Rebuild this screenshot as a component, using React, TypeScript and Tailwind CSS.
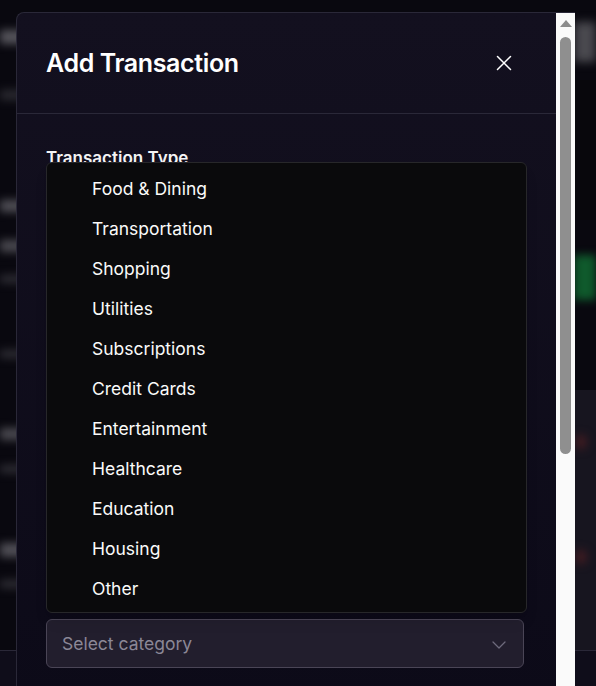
import { ChevronDown } from "lucide-react";

const categories = [
  "Food & Dining",
  "Transportation",
  "Shopping",
  "Utilities",
  "Subscriptions",
  "Credit Cards",
  "Entertainment",
  "Healthcare",
  "Education",
  "Housing",
  "Other",
];

function Backdrop() {
  // blurred dashboard sitting behind the dialog
  return (
    <div className="absolute inset-0 overflow-hidden">
      <div className="absolute left-0 top-[30px] h-[14px] w-[40px] bg-[#55545b] blur-[4px]" />
      <div className="absolute left-0 top-[90px] h-[10px] w-[30px] bg-[#2a2930] blur-[4px]" />
      <div className="absolute left-0 top-[200px] h-[12px] w-[40px] bg-[#504f56] blur-[4px]" />
      <div className="absolute left-0 top-[240px] h-[12px] w-[40px] bg-[#4a4950] blur-[4px]" />
      <div className="absolute left-0 top-[275px] h-[8px] w-[30px] bg-[#2f2e35] blur-[4px]" />
      <div className="absolute left-0 top-[350px] h-[8px] w-[30px] bg-[#2f2e35] blur-[4px]" />
      <div className="absolute left-0 top-[428px] h-[12px] w-[40px] bg-[#4a4950] blur-[4px]" />
      <div className="absolute left-0 top-[465px] h-[8px] w-[30px] bg-[#2f2e35] blur-[4px]" />
      <div className="absolute left-0 top-[543px] h-[14px] w-[40px] bg-[#504f56] blur-[4px]" />
      <div className="absolute left-0 top-[580px] h-[8px] w-[30px] bg-[#2f2e35] blur-[4px]" />
      <div className="absolute left-0 top-[650px] h-[36px] w-[16px] border-t border-[#2a2838] bg-[#0f0d1a]" />

      <div className="absolute right-0 top-[22px] h-[40px] w-[22px] bg-[#4a494f] blur-[5px]" />
      <div className="absolute right-0 top-[80px] h-[140px] w-[22px] bg-[#08070c]" />
      <div className="absolute right-0 top-[255px] h-[45px] w-[22px] bg-[#0f5a2c] blur-[4px]" />
      <div className="absolute right-0 top-[390px] h-[260px] w-[22px] bg-[#17151f]" />
      <div className="absolute right-[10px] top-[435px] h-[14px] w-[10px] rounded-full bg-[#4a1d22] blur-[5px]" />
      <div className="absolute right-[10px] top-[550px] h-[14px] w-[10px] rounded-full bg-[#4a1d22] blur-[5px]" />
      <div className="absolute right-0 top-[650px] h-[36px] w-[22px] border-t border-[#2a2838] bg-[#0f0d1a]" />
    </div>
  );
}

function Scrollbar() {
  return (
    <div className="flex w-[19px] shrink-0 flex-col items-center bg-[#fafafa] pt-[7px]">
      <div className="h-0 w-0 border-x-[6px] border-b-[7px] border-x-transparent border-b-[#8c8c8c]" />
      <div className="mt-[10px] h-[417px] w-[11px] rounded-full bg-[#8f8f8f]" />
    </div>
  );
}

export default function App() {
  return (
    <div
      className="relative h-[686px] w-[596px] overflow-hidden bg-[#09080f] pl-[16px] pt-[12px]"
      style={{ fontFamily: "Inter, 'Noto Sans', sans-serif" }}
    >
      <Backdrop />

      <div className="relative z-10 flex h-[700px] w-[559px] overflow-hidden rounded-tl-[8px] border-l border-t border-[#2a2838] bg-gradient-to-b from-[#13101f] to-[#0c0a18]">
        <div className="relative flex-1">
          <div className="flex h-[101px] items-center justify-between border-b border-[#2a2838] pl-[29px] pr-[30px]">
            <h2 className="text-[25px] font-semibold leading-8 tracking-[-0.015em] text-white">
              Add Transaction
            </h2>
            <button className="mr-[6px] flex size-8 items-center justify-center text-white">
              <svg width="16" height="16" viewBox="0 0 16 16" fill="none" stroke="currentColor" strokeWidth="1.5" strokeLinecap="round">
                <path d="M1.5 1.5 14.5 14.5M14.5 1.5 1.5 14.5" />
              </svg>
            </button>
          </div>

          <div className="px-[29px] pt-[32px]">
            <label className="block text-[17px] font-semibold leading-6 text-[#f4f4f5]">
              Transaction Type
            </label>
            <div className="h-[449px]" />
            <div className="flex h-[49px] w-[478px] items-center justify-between rounded-[6px] border border-[#4a4556] bg-[#221e2d] pl-[15px] pr-[12px] pt-[2px]">
              <span className="text-[17.5px] text-[#8b8796]">Select category</span>
              <ChevronDown className="size-6 text-[#6e6a7c]" strokeWidth={1.25} />
            </div>
          </div>

          {/* open select listbox */}
          <div className="absolute left-[29px] top-[149px] w-[481px] rounded-[6px] border border-[#27272a] bg-[#0a0a0c] px-[4px] pb-[3px] pt-[6px] shadow-lg">
            {categories.map((c) => (
              <div
                key={c}
                className="flex h-[40px] items-center pl-[41px] text-[17.5px] text-[#fafafa]"
              >
                {c}
              </div>
            ))}
          </div>
        </div>
        <Scrollbar />
      </div>
    </div>
  );
}
